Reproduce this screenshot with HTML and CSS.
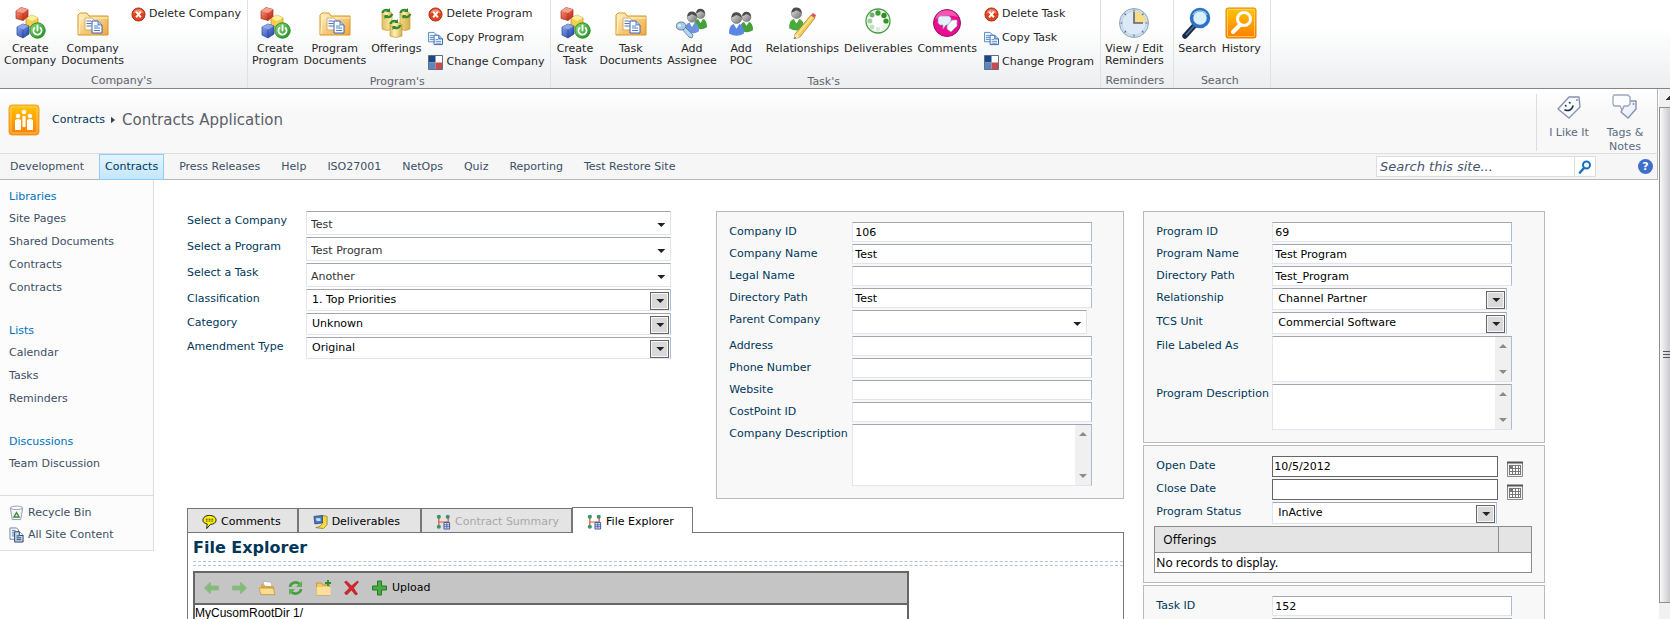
FILE: index.html
```html
<!DOCTYPE html>
<html lang="en">
<head>
<meta charset="utf-8">
<title>Contracts Application</title>
<link rel="stylesheet" href="styles.css">
</head>
<body>
<svg class="defs" aria-hidden="true">
  <defs>
    <linearGradient id="gRed" x1="0" y1="0" x2="1" y2="1"><stop offset="0" stop-color="#ff9a80"/><stop offset="1" stop-color="#b81c08"/></linearGradient>
    <linearGradient id="gBlue" x1="0" y1="0" x2="1" y2="1"><stop offset="0" stop-color="#8fb0f5"/><stop offset="1" stop-color="#1e3aa0"/></linearGradient>
    <linearGradient id="gGreen" x1="0" y1="0" x2="1" y2="1"><stop offset="0" stop-color="#8fe07a"/><stop offset="1" stop-color="#128a18"/></linearGradient>
    <linearGradient id="gFolder" x1="0" y1="0" x2="1" y2="1"><stop offset="0" stop-color="#fff3c0"/><stop offset="1" stop-color="#f0a63a"/></linearGradient>
    <linearGradient id="gGrey" x1="0" y1="0" x2="1" y2="1"><stop offset="0" stop-color="#e8e8e8"/><stop offset="1" stop-color="#6c6c6c"/></linearGradient>
    <linearGradient id="gOrange" x1="0" y1="0" x2="0" y2="1"><stop offset="0" stop-color="#ffc40a"/><stop offset="1" stop-color="#ff7e00"/></linearGradient>
    <linearGradient id="gJar" x1="0" y1="0" x2="1" y2="0"><stop offset="0" stop-color="#e0c060"/><stop offset=".4" stop-color="#fff2b8"/><stop offset="1" stop-color="#d9b048"/></linearGradient>
    <symbol id="create" viewBox="0 0 32 32">
      <path d="M12 11l6-3 6 3v7l-6 3-6-3z" fill="#f3cf4a" stroke="#b98a1c" stroke-width=".7"/><path d="M12 11l6 3 6-3-6-3z" fill="#fff0a0"/>
      <path d="M2 4l5-3.500 7 2v7l-5 4-7-2z" fill="url(#gRed)" stroke="#a5301c" stroke-width=".7"/><path d="M2 4l5-3.500 7 2-5 3.500z" fill="#f5a08c"/><path d="M9 6v7.500" stroke="#a5301c" stroke-width=".6"/>
      <path d="M3 20l6-3 6 2v8l-6 4-6-3z" fill="url(#gBlue)" stroke="#243c90" stroke-width=".7"/><path d="M3 20l6-3 6 2-6 3.500z" fill="#8ea6e8"/><path d="M9 22.500v8" stroke="#243c90" stroke-width=".6"/>
      <circle cx="23.500" cy="23.500" r="7.700" fill="url(#gGreen)" stroke="#2b8a25"/><path d="M20.500 21a4 4 0 1 0 6 0M23.500 18.500v5" fill="none" stroke="#fff" stroke-width="1.900" stroke-linecap="round"/>
    </symbol>
    <symbol id="docs" viewBox="0 0 32 32">
      <path d="M1 28V8l2-2h7l2 3h19v19z" fill="url(#gFolder)" stroke="#d8952c"/><path d="M2 27l1-16h28" fill="none" stroke="#fff4cc"/>
      <path d="M8 11h7l3 3v9H8z" fill="#fffaf0" stroke="#c8a060" stroke-width=".8"/><path d="M9.500 14h5M9.500 16.500h5M9.500 19h5" stroke="#5577b8"/>
      <path d="M15 14h6l4 4v8H15z" fill="#fff" stroke="#3565c0"/><path d="M21 14v4h4" fill="#b8d0ff" stroke="#3565c0" stroke-width=".8"/><path d="M17 19h4M17 21h6M17 23.500h6" stroke="#4a7dd4"/>
    </symbol>
    <symbol id="offer" viewBox="0 0 32 32">
      <g stroke="#b79338" stroke-width=".6" fill="url(#gJar)"><path d="M2 7v15q5 3 10 0V7zM20 7v15q5 3 10 0V7z"/><ellipse cx="7" cy="7" rx="5" ry="2.500"/><ellipse cx="25" cy="7" rx="5" ry="2.500"/><path d="M10 18v11q6 3 12 0V18z"/><ellipse cx="16" cy="18" rx="6" ry="2.500"/></g>
      <g id="cyc" fill="none" stroke="#2f8a2c" stroke-width="2.200"><path d="M2.500 6a4 3.500 0 0 1 7-2M12 7a4 3.500 0 0 1-7 2"/><path d="M10 1v4H6zM4.500 12V8h4z" fill="#2f8a2c" stroke="none"/></g>
      <use href="#cyc" x="18"/><use href="#cyc" x="8" y="11"/>
    </symbol>
    <symbol id="person" viewBox="0 0 16 26">
      <path d="M0 23q0-9 5-10h6q5 1 5 10-8 5-16 0z"/><path d="M5 13l3 5 3-5" fill="#fff"/>
      <circle cx="8" cy="7" r="5.500" fill="url(#gGrey)" stroke="#555" stroke-width=".5"/><path d="M2.600 6Q3 0 8.500.500q5 .5 5 6-4-3-6-3-2 2-4.900 2.500z" fill="#4c4c4c"/>
    </symbol>
    <symbol id="assignee" viewBox="0 0 32 32">
      <use href="#person" x="18" y="0" width="13" height="24" fill="#46a03a"/><use href="#person" x="9" y="3" width="14" height="25" fill="#6c92e0"/>
      <path d="M8 19l9 9-1 3-3-1-8-9z" fill="#b8d4ea" stroke="#456c90" stroke-width=".7"/><ellipse cx="5" cy="19" rx="5" ry="4" fill="#a9cbe6" stroke="#456c90" stroke-width=".8"/><circle cx="3.500" cy="18.500" r="1.300" fill="#fff"/>
    </symbol>
    <symbol id="poc" viewBox="0 0 32 32">
      <use href="#person" x="15" y="3" width="13" height="24" fill="#46a03a"/><use href="#person" x="4" y="4" width="15" height="26" fill="#5c86e4"/>
    </symbol>
    <symbol id="relation" viewBox="0 0 32 32">
      <use href="#person" x="3" y="0" width="15" height="24" fill="#4aaa3c"/>
      <path d="M9 27L25 8l4 3-15 19-6 2z" fill="#f4cf5c" stroke="#9a7420" stroke-width=".7"/><path d="M25 8l4 3 1-3-3-2z" fill="#e0525c"/><path d="M11 28L26 10" stroke="#fff2b0"/><path d="M8 32l1-5 5 3z" fill="#f8e4c0"/><path d="M8 32l1-2 1 1z" fill="#222"/>
    </symbol>
    <symbol id="deliver" viewBox="0 0 32 32">
      <circle cx="16" cy="14" r="12" fill="#fff" stroke="#4c9a45" stroke-width="1.300"/><circle cx="16" cy="14" r="10.500" fill="none" stroke="#d5e8d2" stroke-width=".7"/>
      <circle cx="16" cy="6" r="2.700" fill="#3f9e2f"/><circle cx="22" cy="8.500" r="2.700" fill="#2f8f22"/><circle cx="24" cy="14" r="2.600" fill="#2c9a18"/><circle cx="10" cy="8" r="2.500" fill="#71b268"/><circle cx="8" cy="14" r="2.500" fill="#a2cd9c"/><circle cx="10" cy="20" r="2.400" fill="#c3dfbf"/><circle cx="16" cy="22" r="2.300" fill="#dcecda"/><circle cx="22" cy="20" r="2.300" fill="#e8f2e6"/>
    </symbol>
    <symbol id="comments" viewBox="0 0 32 32">
      <circle cx="16" cy="16" r="13.500" fill="#ef0a92" stroke="#8a1a60"/><path d="M4 12a12.500 12.500 0 0 1 23-2Q16 6 4 12" fill="#ff86cc" opacity=".6"/>
      <path d="M9 9h9l2 2v5l-2 2h-3l-3 4v-4H9l-2-2v-5z" fill="#e6f0fa" stroke="#8ca0b8" stroke-width=".7"/><path d="M16 19l5-6h5v6l-6 6-4-3z" fill="#fff" stroke="#8ca0b8" stroke-width=".7"/>
    </symbol>
    <symbol id="delete" viewBox="0 0 16 16"><circle cx="8" cy="8" r="7" fill="#e2431f" stroke="#a52f18"/><path d="M2.500 7a5.600 5.600 0 0 1 11 0q-5-3-11 0" fill="#f79a80" opacity=".8"/><path d="M5.500 5l5 6M10.500 5l-5 6" stroke="#fff" stroke-width="2.200"/></symbol>
    <symbol id="copy" viewBox="0 0 16 16"><path d="M.5 1.500h6l3 3v7h-9z" fill="#eaf2ff" stroke="#5b87c5"/><path d="M2 5h4M2 7h4M2 9h4" stroke="#5b87c5"/><path d="M6.500 4.500h5l4 4v6h-9z" fill="#fff" stroke="#2f62b5"/><path d="M11.500 4.500v4h4" fill="#a7c5f3" stroke="#2f62b5"/><path d="M8 9h3M8 11h6M8 13h6" stroke="#5b87c5"/></symbol>
    <symbol id="change" viewBox="0 0 16 16"><path d="M.5.500h15v15H.5z" fill="#fff" stroke="#555f7c"/><path d="M1 1h7v7H1z" fill="#1c4785"/><path d="M1 8h7v7H1z" fill="#5c84bd"/><path d="M8 8h7v7H8z" fill="#c84a4a"/></symbol>
    <symbol id="clock" viewBox="0 0 32 32"><circle cx="16" cy="16" r="14.500" fill="#cfdff0" stroke="#8ea5bd"/><circle cx="16" cy="16" r="12" fill="#dce9f7" stroke="#b4c8dc" stroke-width=".6"/><path d="M16 16V4A12 12 0 0 1 28 16z" fill="#f8dc88"/><path d="M16 5v11h9" fill="none" stroke="#5a6470" stroke-width="1.600"/><path d="M16 2.500v2M16 27.500v2M2.500 16h2M27.500 16h2M6.500 6.500L8 8M25.500 6.500L24 8M6.500 25.500L8 24M25.500 25.500L24 24" stroke="#5c6f84" stroke-width="1.200"/></symbol>
    <symbol id="search" viewBox="0 0 32 32"><path d="M13 19L4 29" stroke="#1b2a48" stroke-width="5.500" stroke-linecap="round"/><path d="M13 19L5 28" stroke="#51719c" stroke-width="1.500"/><circle cx="19" cy="11" r="8.500" fill="#d9f1ff" stroke="#2e72c8" stroke-width="3.500"/><path d="M12 8a8 8 0 0 1 14 0" fill="none" stroke="#8ec3f5" stroke-width="1.300"/></symbol>
    <symbol id="history" viewBox="0 0 32 32"><rect x="1" y="1" width="30" height="30" rx="2" fill="url(#gOrange)" stroke="#e08608"/><rect x="2.500" y="2.500" width="27" height="27" rx="1" fill="none" stroke="#ffd970" stroke-width=".8"/><path d="M15 18l-7 7" stroke="#fff" stroke-width="4" stroke-linecap="round"/><circle cx="19" cy="12" r="6.500" fill="none" stroke="#fff" stroke-width="3"/></symbol>
    <symbol id="nodes" viewBox="0 0 16 16"><path d="M3 3v10M3 8h10V3M10 8v3" fill="none" stroke="#e2542e" stroke-width="1.300"/><circle cx="3" cy="2.500" r="2.200" fill="#3a9470"/><circle cx="12.500" cy="2.500" r="2.200" fill="#3a9470"/><circle cx="3" cy="13" r="2.200" fill="#3a9470"/><path d="M8.500 8.500h6v7h-6z" fill="#dce6fa" stroke="#3b5498"/><path d="M8.500 11h6M8.500 13h6M11.500 9v6" stroke="#3b5498" stroke-width=".8"/></symbol>
    <symbol id="cal" viewBox="0 0 16 16"><path d="M.5 1.500h15v14H.5z" fill="#f2f2f2" stroke="#8a8a8a"/><path d="M0 1.500h16" stroke="#555" stroke-width="2"/><path d="M2 4h12v10H2z" fill="#777"/><path d="M6 5h2v2H6zM9 5h2v2H9zM12 5h1v2h-1zM3 8h2v2H3zM6 8h2v2H6zM9 8h2v2H9zM12 8h1v2h-1zM3 11h2v2H3zM6 11h2v2H6zM9 11h2v2H9zM12 11h1v2h-1z" fill="#fff"/></symbol>
    <symbol id="arrow" viewBox="0 0 16 16"><path d="M1 8l6-6v4h8v4H7v4z" fill="#7fbd76" stroke="#92b98e"/></symbol>
  </defs>
</svg>

<nav class="ribbon" aria-label="Ribbon">
  <section class="group">
    <div class="tools">
      <button class="big"><svg><use href="#create"/></svg>Create<br>Company</button>
      <button class="big"><svg><use href="#docs"/></svg>Company<br>Documents</button>
      <div class="stack"><button><svg><use href="#delete"/></svg>Delete Company</button></div>
    </div>
    <h2>Company's</h2>
  </section>
  <section class="group">
    <div class="tools">
      <button class="big"><svg><use href="#create"/></svg>Create<br>Program</button>
      <button class="big"><svg><use href="#docs"/></svg>Program<br>Documents</button>
      <button class="big"><svg><use href="#offer"/></svg>Offerings</button>
      <div class="stack">
        <button><svg><use href="#delete"/></svg>Delete Program</button>
        <button><svg><use href="#copy"/></svg>Copy Program</button>
        <button><svg><use href="#change"/></svg>Change Company</button>
      </div>
    </div>
    <h2>Program's</h2>
  </section>
  <section class="group">
    <div class="tools">
      <button class="big"><svg><use href="#create"/></svg>Create<br>Task</button>
      <button class="big"><svg><use href="#docs"/></svg>Task<br>Documents</button>
      <button class="big"><svg><use href="#assignee"/></svg>Add<br>Assignee</button>
      <button class="big"><svg><use href="#poc"/></svg>Add<br>POC</button>
      <button class="big"><svg><use href="#relation"/></svg>Relationships</button>
      <button class="big"><svg><use href="#deliver"/></svg>Deliverables</button>
      <button class="big"><svg><use href="#comments"/></svg>Comments</button>
      <div class="stack">
        <button><svg><use href="#delete"/></svg>Delete Task</button>
        <button><svg><use href="#copy"/></svg>Copy Task</button>
        <button><svg><use href="#change"/></svg>Change Program</button>
      </div>
    </div>
    <h2>Task's</h2>
  </section>
  <section class="group">
    <div class="tools"><button class="big"><svg><use href="#clock"/></svg>View / Edit<br>Reminders</button></div>
    <h2>Reminders</h2>
  </section>
  <section class="group">
    <div class="tools">
      <button class="big"><svg><use href="#search"/></svg>Search</button>
      <button class="big"><svg><use href="#history"/></svg>History</button>
    </div>
    <h2>Search</h2>
  </section>
</nav>

<div class="viewport">
  <div class="page">
    <header class="title-row">
      <svg class="logo" viewBox="0 0 32 32"><rect x="1" y="1" width="30" height="30" rx="3" fill="url(#gOrange)" stroke="#e9a53a"/><rect x="3" y="3" width="26" height="26" rx="1" fill="none" stroke="#ffd76a" stroke-width=".8"/><g fill="#fff"><circle cx="16" cy="8" r="2.300"/><circle cx="10" cy="12" r="2.200"/><circle cx="22" cy="12" r="2.200"/><path d="M7 16q3-2 6 0v10H7zM19 16q3-2 6 0v10h-6zM14.500 12h3v11h-3z"/></g></svg>
      <a class="crumb" href="#">Contracts</a>
      <svg class="crumb-arrow" viewBox="0 0 5 8"><path d="M0 0l5 4-5 4z" fill="#444"/></svg>
      <h1>Contracts Application</h1>
      <div class="social">
        <button><svg viewBox="0 0 26 26"><path d="M2 15L13 3l10 0 1 10-11 11z" fill="#f7faff" stroke="#8793ad" stroke-width="1.400" stroke-linejoin="round"/><circle cx="21" cy="6" r="1" fill="#8793ad"/><path d="M9 16q6 2 8-4M9.500 11.500l.5.500M13.500 8.500l.5.500" fill="none" stroke="#222b40" stroke-width="1.600" stroke-linecap="round"/></svg>I Like It</button>
        <button><svg viewBox="0 0 26 26"><path d="M12 12l4-5h8v8l-8 9-7-6z" fill="#eef3fc" stroke="#8793ad" stroke-width="1.400" stroke-linejoin="round"/><circle cx="21.500" cy="10" r="1" fill="#8793ad"/><path d="M2 1h14l2 2v7l-2 2h-4l-2 4-2-4H2l-1-2V3z" fill="#fbfcff" stroke="#9aa6bf" stroke-width="1.300"/></svg>Tags &amp;<br>Notes</button>
      </div>
    </header>
    <nav class="topnav" aria-label="Sites">
      <a href="#">Development</a><a class="current" href="#">Contracts</a><a href="#">Press Releases</a><a href="#">Help</a><a href="#">ISO27001</a><a href="#">NetOps</a><a href="#">Quiz</a><a href="#">Reporting</a><a href="#">Test Restore Site</a>
      <form class="site-search">
        <input type="text" aria-label="Search this site" placeholder="Search this site...">
        <button type="button" aria-label="Search"><svg viewBox="0 0 14 14"><circle cx="8.500" cy="5" r="3.500" fill="#fff" stroke="#1673c4" stroke-width="2"/><path d="M6 8l-4 4.500" stroke="#1673c4" stroke-width="2.600" stroke-linecap="round"/></svg></button>
      </form>
      <button class="help" aria-label="Help">?</button>
    </nav>

    <div class="body">
      <aside class="side">
        <div class="side-list"><a class="head" href="#">Libraries</a><a href="#">Site Pages</a><a href="#">Shared Documents</a><a href="#">Contracts</a><a href="#">Contracts</a></div>
        <div class="side-list"><a class="head" href="#">Lists</a><a href="#">Calendar</a><a href="#">Tasks</a><a href="#">Reminders</a></div>
        <div class="side-list"><a class="head" href="#">Discussions</a><a href="#">Team Discussion</a></div>
        <div class="side-foot">
          <a href="#"><svg viewBox="0 0 16 16"><path d="M1.500 3l2 12h9l2-12z" fill="#f2f6fa" stroke="#8f9aa8"/><ellipse cx="8" cy="2.500" rx="6.500" ry="1.800" fill="#fff" stroke="#8f9aa8"/><path d="M8 6l4 7H4zM8 9l-1.500 2.500h3z" fill="#3c8a3c" fill-rule="evenodd"/></svg>Recycle Bin</a>
          <a href="#"><svg viewBox="0 0 16 16"><path d="M1 .5h7l2 2v10H1z" fill="#fff" stroke="#6a7d96"/><path d="M3 3h4M3 5h4M3 7h3M3 9h3" stroke="#4c74b0"/><path d="M6 4.500h5l4 4v7H6z" fill="#c9d9f0" stroke="#24406c"/><path d="M11 4.500v4h4" fill="#fff" stroke="#24406c"/><path d="M8 9h3M8 11h5M8 13h5" stroke="#24406c"/></svg>All Site Content</a>
        </div>
      </aside>

      <main class="content">
        <div class="primary">
          <div class="upper">
            <form class="fields picker">
              <label for="c1">Select a Company</label><span class="combo"><select id="c1"><option>Test</option></select></span>
              <label for="c2">Select a Program</label><span class="combo"><select id="c2"><option>Test Program</option></select></span>
              <label for="c3">Select a Task</label><span class="combo"><select id="c3"><option>Another</option></select></span>
              <label for="c4">Classification</label><span class="drop"><select id="c4"><option>1. Top Priorities</option></select></span>
              <label for="c5">Category</label><span class="drop"><select id="c5"><option>Unknown</option></select></span>
              <label for="c6">Amendment Type</label><span class="drop"><select id="c6"><option>Original</option></select></span>
            </form>
            <form class="panel fields company">
              <label for="d1">Company ID</label><input id="d1" type="text" value="106">
              <label for="d2">Company Name</label><input id="d2" type="text" value="Test">
              <label for="d3">Legal Name</label><input id="d3" type="text">
              <label for="d4">Directory Path</label><input id="d4" type="text" value="Test">
              <label for="d5">Parent Company</label><span class="combo short"><select id="d5"><option></option></select></span>
              <label for="d6">Address</label><input id="d6" type="text">
              <label for="d7">Phone Number</label><input id="d7" type="text">
              <label for="d8">Website</label><input id="d8" type="text">
              <label for="d9">CostPoint ID</label><input id="d9" type="text">
              <label for="d10">Company Description</label><span class="area tall"><textarea id="d10"></textarea><i></i></span>
            </form>
          </div>

          <section>
            <div class="tabs" role="tablist">
              <button role="tab"><svg viewBox="0 0 16 16"><path d="M8 1c4 0 7 2 7 5s-3 4.500-6 4.500L5 15l.5-5C3 9.500 1 8.500 1 6c0-3 3-5 7-5z" fill="#fff200" stroke="#111"/><path d="M4 5h2M7 5h2M10 5h2M4 7h2M7 7h2M10 7h2" stroke="#333"/></svg>Comments</button>
              <button role="tab"><svg viewBox="0 0 16 16"><path d="M10 1l5 1v9l-4 4-8-1q6-1 7-5z" fill="#f2dd3c" stroke="#8a7a18" stroke-width=".8"/><path d="M1 2l9-1v8l-8 1z" fill="#4a78c8" stroke="#24406c" stroke-width=".8"/><path d="M3 4h5v3H4z" fill="#cfe0ff"/></svg>Deliverables</button>
              <button role="tab" disabled><svg><use href="#nodes"/></svg>Contract Summary</button>
              <button role="tab" class="active" aria-selected="true"><svg><use href="#nodes"/></svg>File Explorer</button>
            </div>
            <div class="tab-body">
              <h2>File Explorer</h2>
              <div class="rule"></div>
              <div class="explorer">
                <div class="toolbar">
                  <button aria-label="Back"><svg><use href="#arrow"/></svg></button>
                  <button aria-label="Forward"><svg class="flip"><use href="#arrow"/></svg></button>
                  <button aria-label="Open"><svg viewBox="0 0 18 16"><path d="M5 1l8 1 1 8H4z" fill="#fff" stroke="#aaa" stroke-width=".7"/><path d="M2 4h3l2 2h9v9H2z" fill="#dca84a"/><path d="M0 8h15l2 7H2z" fill="#f9dc8e" stroke="#c08a30" stroke-width=".7"/></svg></button>
                  <button aria-label="Refresh"><svg viewBox="0 0 16 16"><path d="M2.500 7a5.500 5 0 0 1 9.500-3M13.500 9a5.500 5 0 0 1-9.500 3" fill="none" stroke="#4a9c40" stroke-width="2.600"/><path d="M14.500 1v6H8.500zM1.500 15V9h6z" fill="#5cb052"/></svg></button>
                  <button aria-label="New folder"><svg viewBox="0 0 16 16"><path d="M1 3h5l1 2h7v10H1z" fill="#f2c966" stroke="#c08c34" stroke-width=".8"/><path d="M1 15V7h14v8z" fill="#fae09a"/><path d="M12.500 0v6M9.500 3h6" stroke="#2e8c2a" stroke-width="1.800"/></svg></button>
                  <button aria-label="Delete"><svg viewBox="0 0 16 16"><path d="M1 2l2-1 5 5 6-5 1 1-5 6 4 6-2 1-4-5-5 5-2-2 5-5z" fill="#d8232a" stroke="#9c1a1c" stroke-width=".6"/></svg></button>
                  <button><svg viewBox="0 0 16 16"><path d="M6 1h4v5h5v4h-5v5H6v-5H1V6h5z" fill="#48ac3e" stroke="#237a25"/></svg>Upload</button>
                </div>
                <div class="path">MyCusomRootDir 1/</div>
              </div>
            </div>
          </section>
        </div>

        <div class="details">
          <form class="panel fields program">
            <label for="p1">Program ID</label><input id="p1" type="text" value="69">
            <label for="p2">Program Name</label><input id="p2" type="text" value="Test Program">
            <label for="p3">Directory Path</label><input id="p3" type="text" value="Test_Program">
            <label for="p4">Relationship</label><span class="drop short"><select id="p4"><option>Channel Partner</option></select></span>
            <label for="p5">TCS Unit</label><span class="drop short"><select id="p5"><option>Commercial Software</option></select></span>
            <label for="p6">File Labeled As</label><span class="area"><textarea id="p6"></textarea><i></i></span>
            <label for="p7">Program Description</label><span class="area"><textarea id="p7"></textarea><i></i></span>
          </form>
          <form class="panel dates">
            <div class="fields program">
              <label for="q1">Open Date</label><span class="date"><input id="q1" type="text" value="10/5/2012"><button type="button" aria-label="Pick open date"><svg><use href="#cal"/></svg></button></span>
              <label for="q2">Close Date</label><span class="date"><input id="q2" type="text"><button type="button" aria-label="Pick close date"><svg><use href="#cal"/></svg></button></span>
              <label for="q3">Program Status</label><span class="drop shorter"><select id="q3"><option>InActive</option></select></span>
            </div>
            <table><thead><tr><th>Offerings</th><th class="narrow"></th></tr></thead><tbody><tr><td colspan="2">No records to display.</td></tr></tbody></table>
          </form>
          <form class="panel fields program">
            <label for="t1">Task ID</label><input id="t1" type="text" value="152">
            <input class="second" type="text" aria-label="Task Name">
          </form>
        </div>
      </main>
    </div>
  </div>
  <div class="scrollbar" aria-hidden="true"><div class="up"></div><div class="thumb"></div></div>
</div>
</body>
</html>
```
FILE: styles.css
```css
* { box-sizing: border-box; }
body {
  margin: 0;
  height: 100vh;
  overflow: hidden;
  display: flex;
  flex-direction: column;
  background: #fff;
  color: #3b4f65;
  font: 11px/14px "DejaVu Sans", Verdana, sans-serif;
}
.defs { position: absolute; width: 0; height: 0; }
button, input, select, textarea { font: inherit; color: inherit; }
button { margin: 0; padding: 0; border: 0; background: none; }
a { color: inherit; text-decoration: none; }
h1, h2 { margin: 0; font-weight: normal; }
form { margin: 0; }

/* Ribbon */
.ribbon {
  flex: none;
  display: flex;
  height: 89px;
  border-bottom: 1px solid #838488;
  background: linear-gradient(#fff 30%, #eceef0);
  color: #262626;
}
.group {
  display: flex;
  flex-direction: column;
  justify-content: space-between;
  padding: 0 6px 0 2px;
  border-right: 1px solid #dfe1e4;
}
.group h2 { font-size: 11px; line-height: 15px; text-align: center; color: #5d636b; }
.tools { display: flex; }
.big {
  display: flow-root;
  min-width: 44px;
  padding: 7px 3px 0 2px;
  line-height: 12px;
  text-align: center;
  align-self: flex-start;
}
.big svg { display: block; width: 32px; height: 32px; margin: 0 auto 4px; }
.stack { display: flex; flex-direction: column; padding: 2px 0 0 4px; }
.stack button { display: flex; align-items: center; gap: 3px; height: 24px; white-space: nowrap; }
.stack svg { width: 15px; height: 15px; }

/* Page frame */
.viewport { flex: 1; min-height: 0; display: flex; }
.page { flex: 1; min-width: 0; overflow: hidden; }
.scrollbar { flex: none; width: 12px; display: flex; flex-direction: column; background: #f1f1f1; border-left: 1px solid #fff; }
.up { height: 18px; background: linear-gradient(135deg, transparent 50%, #333 50%) 7px 7px / 4px 4px no-repeat; }
.thumb {
  height: 496px;
  border: 1px solid #8f8f8f;
  border-right: 0;
  background:
    repeating-linear-gradient(#555 0 1px, transparent 1px 3px) right center / 7px 8px no-repeat,
    linear-gradient(90deg, #f8f8f8, #c9cace);
}

/* Title row */
.title-row {
  display: flex;
  align-items: center;
  height: 64px;
  padding: 0 0 2px 8px;
  border-right: 1px solid #b5b7ba;
  background: linear-gradient(#fff, #f8f8f8 40%);
}
.logo { width: 32px; height: 32px; }
.crumb { margin-left: 12px; color: #003759; }
.crumb-arrow { width: 4px; height: 8px; margin: 0 7px 0 6px; }
h1 { font-size: 15px; line-height: 20px; color: #5c6068; }
.social { display: flex; align-self: stretch; margin: 5px 8px 0 auto; padding-left: 8px; border-left: 1px solid #dcdde0; color: #5b6b80; }
.social button { display: flow-root; width: 48px; align-self: flex-start; }
.social button + button { margin-left: 8px; }
.social svg { display: block; width: 26px; height: 26px; margin: 0 auto 6px; }

/* Site tabs */
.topnav {
  display: flex;
  align-items: center;
  height: 27px;
  padding: 0 4px;
  border: solid #b5b7ba;
  border-width: 1px 1px 1px 0;
  border-top-color: #dcdde0;
  background: #f6f6f6;
}
.topnav a { padding: 5px; border: 1px solid transparent; margin-right: 9px; white-space: nowrap; }
.topnav .current { border-color: #91cdf2; background: linear-gradient(#e4f4fe, #c2e6fb); color: #003759; }
.site-search { display: flex; width: 220px; height: 21px; margin-left: auto; border: 1px solid #dcdde0; background: #fff; }
.site-search input { flex: 1; min-width: 0; padding: 0 3px; border: 0; border-right: 1px solid #dcdde0; background: none; font-size: 13px; font-style: italic; }
.site-search input::placeholder { color: #44546a; opacity: 1; }
.site-search button { width: 20px; height: 19px; }
.site-search svg { display: block; width: 14px; height: 14px; margin: 0 auto; }
.help { width: 15px; height: 15px; margin-left: 42px; border-radius: 50%; background: #3f6ecb; color: #fff; font-weight: bold; line-height: 15px; }

/* Left navigation */
.body { display: flex; align-items: flex-start; }
.side { flex: none; width: 154px; border: 1px solid #dcdde0; border-width: 0 1px 1px 0; background: #fcfcfc; }
.side-list { display: flex; flex-direction: column; padding: 6px 9px 10px; }
.side-list a { line-height: 23px; white-space: nowrap; }
.side-list .head { line-height: 21px; color: #0072bc; }
.side-list + .side-list { padding-top: 11px; }
.side-foot { display: flex; flex-direction: column; gap: 6px; margin-top: 10px; padding: 9px 9px 7px; border-top: 1px solid #dcdde0; }
.side-foot a { display: flex; align-items: center; gap: 4px; }
.side-foot svg { width: 15px; height: 16px; }

/* Work area */
.content { flex: 1; min-width: 0; display: grid; grid-template-columns: 7fr 3fr; gap: 19px; padding: 31px 113px 0 33px; color: #003759; }
.primary, .details { min-width: 0; }
.upper { display: grid; grid-template-columns: minmax(0, 1fr) 408px; gap: 45px; align-items: start; }
.fields { display: grid; row-gap: 2px; align-items: start; }
.fields label { padding-top: 3px; white-space: nowrap; }
.picker { grid-template-columns: 119px minmax(0, 1fr); }
.company { grid-template-columns: 123px 240px; }
.program { grid-template-columns: 116px 240px; }
.panel { padding: 10px 12px 12px; border: 1px solid #b8babd; background: #f8f8f8; margin-bottom: 2px; }
input, .area, .combo, .drop { border: 1px solid #dfe4ee; border-top-color: #a3a6ad; background: #fff; }
.fields input { width: 100%; height: 20px; padding: 0 2px; border-right-color: #a9bbd6; color: #000; }
.fields .second { grid-column: 2; }
.combo, .drop { position: relative; display: block; }
.combo { height: 24px; }
.drop { height: 22px; border-right-color: #a9c0e2; }
.short { margin-right: 5px; }
.shorter { margin-right: 15px; }
select { appearance: none; display: block; width: 100%; height: 100%; padding: 0 4px; border: 0; background: none; color: #333; }
.combo select { padding-top: 3px; }
.drop select { padding-left: 5px; color: #000; }
.combo::after, .drop::after {
  content: "";
  position: absolute;
  pointer-events: none;
  background: #222;
  clip-path: polygon(0 0, 100% 0, 50% 100%);
  width: 8px;
  height: 4px;
  right: 5px;
  top: 11px;
}
.drop::after { right: 6px; top: 9px; }
.drop::before { content: ""; position: absolute; pointer-events: none; right: 1px; top: 2px; width: 17px; height: 16px; border: 1px solid #666; background: #d9d9d9; box-shadow: inset 0 0 0 1px #f6f6f6; }
.area { display: flex; height: 46px; border-right-color: #a9bbd6; }
.tall { height: 62px; }
textarea { flex: 1; min-width: 0; border: 0; padding: 2px; resize: none; background: none; }
.area i { display: flex; flex-direction: column; justify-content: space-between; align-items: center; width: 16px; padding: 7px 0; background: #f0f0f0; }
.area i::before, .area i::after { content: ""; border: solid transparent; border-width: 0 4px 4px; border-bottom-color: #8b8b8b; }
.area i::after { border-width: 4px 4px 0; border-top-color: #8b8b8b; }
.dates { padding-bottom: 9px; }
.date { display: flex; gap: 9px; height: 21px; }
.date input { flex: none; width: 226px; height: 21px; border: 1px solid #666; padding: 0 1px; }
.date button { padding-top: 4px; }
.date svg { display: block; width: 16px; height: 16px; }
table { width: 378px; margin: 2px -2px 0; border-collapse: collapse; color: #000; font-family: "Noto Sans", sans-serif; font-size: 12px; }
th, td { border: 1px solid #8c8c8c; text-align: left; font-weight: normal; }
th { height: 26px; padding: 1px 8px 0; background: #e4e4e4; }
td { height: 20px; padding: 0 1px; background: #fff; }
.narrow { width: 33px; }

/* Tabs and file explorer */
.tabs { display: flex; align-items: flex-end; margin-top: 6px; color: #000; }
.tabs button { display: flex; align-items: center; gap: 4px; height: 24px; padding: 2px 16px 0 14px; border: 1px solid #777; border-bottom: 0; background: #e4e4e4; white-space: nowrap; }
.tabs button:disabled { padding-right: 12px; color: #a8a8a8; }
.tabs button:nth-child(2) { padding-right: 20px; }
.tabs .active { position: relative; height: 26px; margin-bottom: -1px; padding-right: 18px; background: #fff; }
.tabs svg { width: 15px; height: 16px; }
.tab-body { padding: 5px 0 0 5px; border: 1px solid #777; }
.tab-body h2 { font-size: 16px; line-height: 20px; font-weight: bold; }
.rule { height: 5px; margin: 3px 0 5px; border: dashed #b5c3dc; border-width: 1px 0; }
.explorer { width: 77%; border: 2px solid #666; }
.toolbar { display: flex; align-items: center; gap: 11px; height: 32px; padding: 0 8px; border-bottom: 2px solid #666; background: #c5c5c5; color: #000; }
.toolbar button { display: flex; align-items: center; gap: 4px; }
.toolbar svg { width: 17px; height: 16px; }
.toolbar .flip { transform: scaleX(-1); }
.path { height: 40px; font: 12px/16px "Liberation Sans", Arial, sans-serif; color: #000; }
```
